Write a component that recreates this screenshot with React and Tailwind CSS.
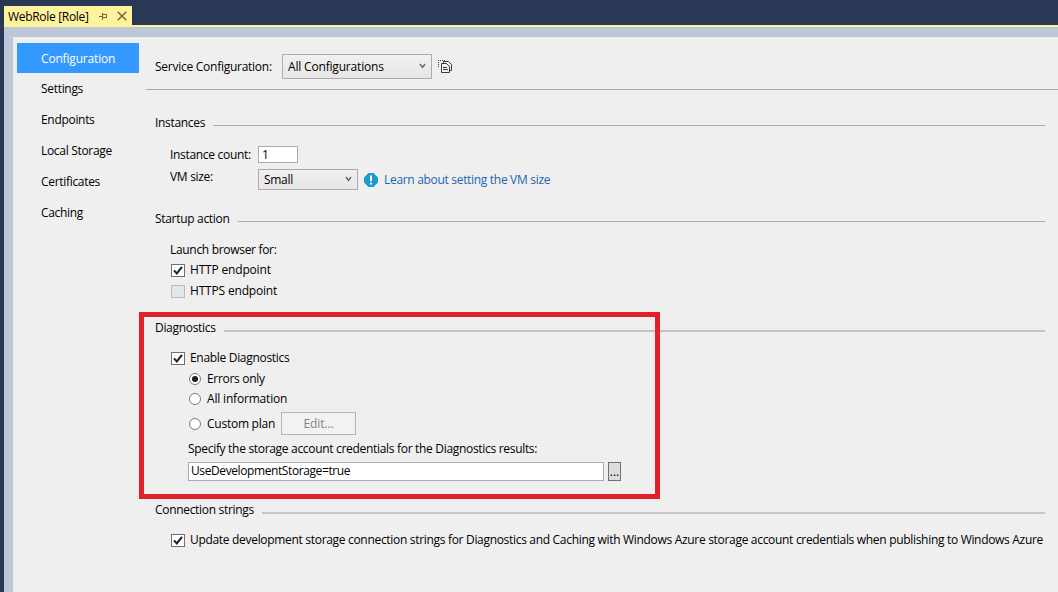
import React from 'react';

function Check({ checked, disabled }) {
  return (
    <span
      className={
        'flex h-[13px] w-[14px] shrink-0 items-center justify-center border ' +
        (disabled ? 'border-[#bcbcbc] bg-[#e6e6e6]' : 'border-[#707070] bg-white')
      }
    >
      {checked && (
        <svg width="12" height="11" viewBox="0 0 12 11" fill="none" stroke="#1e1e1e" strokeWidth="2">
          <path d="M2 5.4 4.8 8.4 10 1.8" />
        </svg>
      )}
    </span>
  );
}

function Radio({ checked }) {
  return (
    <span className="flex size-3 shrink-0 items-center justify-center rounded-full border border-[#7b7b7b] bg-white">
      {checked && <span className="size-1.5 rounded-full bg-[#1e1e1e]" />}
    </span>
  );
}

function Chevron() {
  return (
    <svg className="-mt-0.5" width="7" height="6" viewBox="0 0 7 6" fill="none" stroke="#606060" strokeWidth="1.4">
      <path d="M1 1 3.5 4.4 6 1" />
    </svg>
  );
}

function Section({ title, line }) {
  return (
    <div className="flex h-5 items-center gap-2 pl-4">
      <span>{title}</span>
      <span className={'mt-[5px] mr-[13px] flex-1 ' + line} />
    </div>
  );
}

const tabs = ['Settings', 'Endpoints', 'Local Storage', 'Certificates', 'Caching'];

export default function App() {
  return (
    <div className="relative flex h-[592px] w-[1058px] flex-col overflow-hidden bg-[#293955] pl-1 font-['Open_Sans','Noto_Sans',sans-serif] text-[12px] leading-5 tracking-[-0.31px] whitespace-nowrap text-black">
      <div className="flex h-[25px] shrink-0 items-end">
        <div className="flex h-[19px] w-32 items-center bg-[#fff29d] pl-1">
          <span className="mt-0.5 w-[90px]">WebRole [Role]</span>
          <svg className="mt-px" width="10" height="9" viewBox="0 0 10 9" fill="none" stroke="#75633d">
            <path d="M1 4.5H4M4.5 1V8M4.5 2.5H8.5V6M4.5 5.5H9" />
          </svg>
          <svg className="ml-[9px]" width="10" height="10" viewBox="0 0 10 10" fill="none" stroke="#75633d" strokeWidth="1.5">
            <path d="M.7.7 9.3 9.3M9.3.7.7 9.3" />
          </svg>
        </div>
      </div>
      <div className="h-0.5 shrink-0 bg-[#fff29d]" />
      <div className="flex min-h-0 flex-1 bg-[#bcc7d8] pt-2.5 pl-[9px]">
        <div className="flex min-w-0 flex-1 bg-[#efefef]">
          <nav className="w-[126px] shrink-0 pt-1.5 pl-1">
            <div className="flex h-[30px] w-[122px] items-center bg-[#3399ff] pt-px pl-6 tracking-[-0.18px] text-white">Configuration</div>
            {tabs.map((t) => (
              <div key={t} className="flex h-[31px] items-center pl-6">{t}</div>
            ))}
          </nav>
          <main className="flex min-w-0 flex-1 flex-col">
            <div className="ml-[7px] flex h-[53px] shrink-0 items-center border-b border-[#a5acbd] pt-[7px] pl-[9px]">
              <span className="w-[127px] tracking-[-0.26px]">Service Configuration:</span>
              <div className="flex h-[25px] w-[150px] items-center justify-between border border-[#acacac] bg-linear-to-b from-[#f0f0f0] to-[#e7e7e7] pr-[5px] pl-[5px]">
                <span className="tracking-[-0.18px]">All Configurations</span>
                <Chevron />
              </div>
              <svg className="-mt-px ml-1.5" width="16" height="16" viewBox="0 0 16 16" fill="none" stroke="#3c3c3c">
                <path d="M0 2.5H7M.5 4V9" strokeDasharray="1 1" />
                <path d="M5.5 5V3.5H10.5L13.5 6.5V12.5H12" />
                <path d="M3.5 5.5H8.5L11.5 8.5V14.5H3.5ZM5 9.5H9M5 11.5H10" />
              </svg>
            </div>

            <div className="mt-[23px]"><Section title="Instances" line="h-px bg-[#a5acb8]" /></div>
            <div className="mt-[13px] flex h-[17px] items-center pl-[31px]">
              <span className="w-[88px]">Instance count:</span>
              <span className="flex h-[17px] w-10 items-center border border-[#ababb3] bg-white pl-[3px]">1</span>
            </div>
            <div className="mt-1.5 flex h-[21px] items-center pl-[31px]">
              <span className="-mt-[5px] w-[88px]">VM size:</span>
              <div className="flex h-[21px] w-[100px] items-center justify-between border border-[#acacac] bg-linear-to-b from-[#f0f0f0] to-[#e7e7e7] pr-[5px] pl-[5px]">
                <span>Small</span>
                <Chevron />
              </div>
              <svg className="ml-1.5" width="14" height="14" viewBox="0 0 14 14">
                <path d="M4.5 0H9.5L14 4.5V9.5L9.5 14H4.5L0 9.5V4.5Z" fill="#1c9bd2" />
                <path d="M7 2.5V8.3M7 9.7V11.6" stroke="#fff" strokeWidth="2" />
              </svg>
              <span className="ml-1.5 text-[#1a66b3]">Learn about setting the VM size</span>
            </div>

            <div className="mt-[19px]"><Section title="Startup action" line="h-px bg-[#a9acb2]" /></div>
            <div className="mt-[11px] pl-[31px]">Launch browser for:</div>
            <div className="flex h-[21px] items-center gap-[5px] pl-8"><Check checked /><span className="-mt-0.5 tracking-[-0.18px]">HTTP endpoint</span></div>
            <div className="flex h-[21px] items-center gap-[5px] pl-8"><Check disabled /><span className="-mt-0.5 tracking-[-0.18px]">HTTPS endpoint</span></div>

            <div className="mt-4"><Section title="Diagnostics" line="h-0.5 bg-[#c2c3c7]" /></div>
            <div className="mt-2.5 flex h-[21px] items-center gap-[5px] pl-8"><Check checked /><span className="-mt-0.5">Enable Diagnostics</span></div>
            <div className="flex h-5 items-center gap-1.5 pl-[50px]"><Radio checked /><span>Errors only</span></div>
            <div className="flex h-5 items-center gap-1.5 pl-[50px]"><Radio /><span className="tracking-[-0.18px]">All information</span></div>
            <div className="mt-[3px] flex h-[23px] items-center pl-[50px]">
              <Radio />
              <span className="ml-1.5 w-[74px] tracking-[-0.25px]">Custom plan</span>
              <span className="flex h-[23px] w-[75px] items-center justify-center border border-[#b4b4b4] bg-[#f2f2f2] tracking-[-0.1px] text-[#838383]">Edit...</span>
            </div>
            <div className="mt-1 pl-[49px]">Specify the storage account credentials for the Diagnostics results:</div>
            <div className="mt-[3px] flex h-[19px] gap-1 pl-[49px]">
              <span className="flex w-[416px] items-center border border-[#abadb3] bg-white pb-px pl-0.5 tracking-[-0.4px]">UseDevelopmentStorage=true</span>
              <span className="flex w-[13px] items-center justify-center border border-[#707070] bg-[#dddddd] tracking-normal">...</span>
            </div>

            <div className="mt-[19px]"><Section title="Connection strings" line="h-0.5 bg-[#c3c7d1]" /></div>
            <div className="mt-2.5 flex h-[21px] items-center gap-[5px] pl-8">
              <Check checked />
              <span className="-mt-0.5">Update development storage connection strings for Diagnostics and Caching with Windows Azure storage account credentials when publishing to Windows Azure</span>
            </div>
          </main>
        </div>
      </div>
      <div className="absolute top-[312px] left-[139px] h-[187px] w-[521px] border-[5px] border-[#e0212b]" />
    </div>
  );
}
